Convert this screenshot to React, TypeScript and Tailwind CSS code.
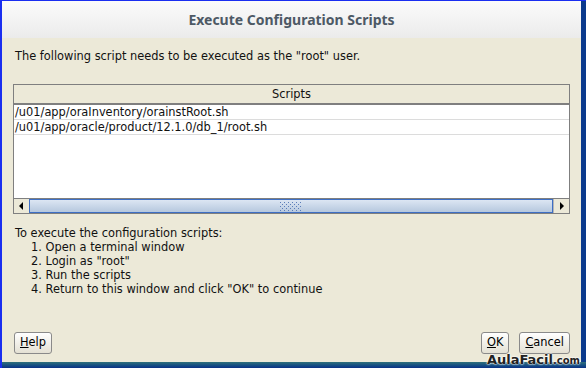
import React from "react";

const scripts = [
  "/u01/app/oraInventory/orainstRoot.sh",
  "/u01/app/oracle/product/12.1.0/db_1/root.sh",
];

const steps = [
  "Open a terminal window",
  'Login as "root"',
  "Run the scripts",
  'Return to this window and click "OK" to continue',
];

function DlgButton({ label, hot, className }: { label: string; hot: string; className?: string }) {
  const rest = label.slice(hot.length);
  return (
    <button
      className={`h-[22px] rounded-[3px] border border-[#8a8a8a] bg-gradient-to-b from-[#ffffff] to-[#e4e1d4] px-[5px] text-[11.4px] text-black ${className || ""}`}
    >
      <span className="underline">{hot}</span>
      {rest}
    </button>
  );
}

export default function App() {
  return (
    <div
      className="relative flex h-[368px] w-[586px] flex-col overflow-hidden border-l-2 border-t border-[#1a2ef0] bg-[#ece9d8] text-[#111]"
      style={{ fontFamily: '"DejaVu Sans", Verdana, sans-serif' }}
    >
      <div className="flex flex-1 flex-col border-r-[5px] border-[#0b3a8c]">
        {/* title bar */}
        <div className="flex h-[37px] shrink-0 items-center justify-center bg-gradient-to-b from-[#fbfbfb] to-[#ebebeb]">
          <span
            className="text-[14px] font-bold text-[#4d5965]"
            style={{ fontFamily: '"Noto Sans", "DejaVu Sans", sans-serif' }}
          >
            Execute Configuration Scripts
          </span>
        </div>

        <div className="flex flex-1 flex-col px-[11px] text-[11.4px]">
          <p className="mt-[11px] pl-[2px] leading-[14px]">
            The following script needs to be executed as the "root" user.
          </p>

          {/* table */}
          <div className="mt-[21px] flex h-[130px] flex-col border border-[#7f7f7f] bg-white">
            <div className="flex h-[20px] shrink-0 items-center justify-center border-b-2 border-[#7f7f7f] bg-[#ece9d8] pt-[1px]">
              Scripts
            </div>
            {scripts.map((s) => (
              <div key={s} className="flex h-[15px] shrink-0 items-center border-b border-[#dcdcdc] pl-[1px] leading-[14px]">
                {s}
              </div>
            ))}
            <div className="flex-1" />
            {/* horizontal scrollbar */}
            <div className="flex h-[15px] shrink-0 border-t border-[#7f7f7f]">
              <div className="flex w-[15px] items-center justify-center bg-[#ece9d8]">
                <svg width="5" height="8" viewBox="0 0 5 8">
                  <path d="M4 0L0 4L4 8Z" fill="#000" />
                </svg>
              </div>
              <div className="flex flex-1 items-center justify-center border border-[#3e6fc4] bg-gradient-to-b from-[#dce6f3] to-[#b6c8de]">
                <svg width="22" height="9" viewBox="0 0 22 9">
                  {[0, 1, 2, 3, 4].map((r) =>
                    [0, 1, 2, 3, 4, 5].map((c) => (
                      <rect
                        key={`${r}-${c}`}
                        x={c * 4 + (r % 2 ? 2 : 0)}
                        y={r * 2}
                        width="1"
                        height="1"
                        fill="#5a7cb8"
                      />
                    ))
                  )}
                </svg>
              </div>
              <div className="flex w-[16px] items-center justify-center border-l border-[#b5b5b5] bg-[#ece9d8]">
                <svg width="5" height="8" viewBox="0 0 5 8">
                  <path d="M1 0L5 4L1 8Z" fill="#000" />
                </svg>
              </div>
            </div>
          </div>

          {/* instructions */}
          <div className="mt-[12px] pl-[2px] leading-[14px]">
            <p>To execute the configuration scripts:</p>
            <ol className="pl-[16px]">
              {steps.map((s, i) => (
                <li key={s}>
                  {i + 1}. {s}
                </li>
              ))}
            </ol>
          </div>

          <div className="flex-1" />

          {/* buttons */}
          <div className="mb-[8px] flex items-center">
            <DlgButton label="Help" hot="H" className="ml-[1px]" />
            <div className="flex-1" />
            <DlgButton label="OK" hot="O" />
            <DlgButton label="Cancel" hot="C" className="ml-[10px]" />
          </div>
        </div>
      </div>

      {/* bottom frame */}
      <div className="h-[6px] shrink-0 bg-gradient-to-b from-[#2f6f7a] to-[#0d2f86]" />

      {/* watermark */}
      <div
        className="absolute bottom-[-1px] right-[6px] flex items-baseline font-bold text-[#222]"
        style={{ fontFamily: '"DejaVu Sans", sans-serif', textShadow: "0 0 2px #fff, 0 0 2px #fff, 0 0 1px #fff" }}
      >
        <span className="text-[13px] leading-[16px]">AulaFacil</span>
        <span className="text-[10px] leading-[16px]">.com</span>
      </div>
    </div>
  );
}
